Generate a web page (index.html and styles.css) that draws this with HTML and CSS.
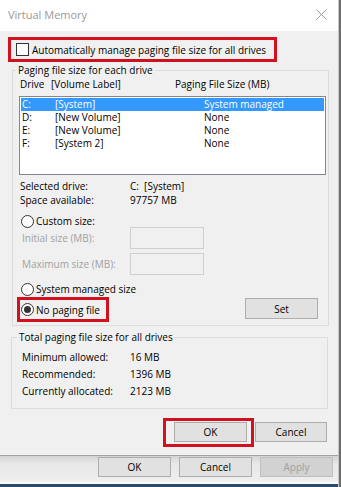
FILE: index.html
```html
<!DOCTYPE html>
<html lang="en">
<head>
    <meta charset="UTF-8">
    <title>Virtual Memory</title>
    <link rel="stylesheet" href="styles.css">
</head>
<body>
<div class="screen">
    <div class="main">
        <div class="dialog">
            <div class="titlebar">
                <span class="title">Virtual Memory</span>
                <svg class="close" width="11" height="11" viewBox="0 0 11 11">
                    <path d="M0.5 0.5 L10.5 10.5 M10.5 0.5 L0.5 10.5" stroke="#9a9a9a" stroke-width="1"/>
                </svg>
            </div>
            <div class="content">
                <div class="highlight auto-box">
                    <span class="checkbox"></span>
                    <span>Automatically manage paging file size for all drives</span>
                </div>

                <fieldset class="group group-drives">
                    <legend>Paging file size for each drive</legend>
                    <div class="list-head">
                        <span>Drive</span>
                        <span>[Volume Label]</span>
                        <span>Paging File Size (MB)</span>
                    </div>
                    <div class="listbox">
                        <div class="list-row selected"><span>C:</span><span>[System]</span><span>System managed</span></div>
                        <div class="list-row"><span>D:</span><span>[New Volume]</span><span>None</span></div>
                        <div class="list-row"><span>E:</span><span>[New Volume]</span><span>None</span></div>
                        <div class="list-row"><span>F:</span><span>[System 2]</span><span>None</span></div>
                    </div>
                    <div class="info">
                        <span>Selected drive:</span><span>C:&nbsp; [System]</span>
                        <span>Space available:</span><span>97757 MB</span>
                    </div>
                    <div class="radio-row row-custom">
                        <span class="radio"></span><span>Custom size:</span>
                    </div>
                    <div class="field-row">
                        <span>Initial size (MB):</span><span class="textbox"></span>
                    </div>
                    <div class="field-row row-max">
                        <span>Maximum size (MB):</span><span class="textbox"></span>
                    </div>
                    <div class="radio-row row-managed">
                        <span class="radio"></span><span>System managed size</span>
                    </div>
                    <div class="nopage-row">
                        <div class="highlight nopage-box">
                            <span class="radio checked"></span><span>No paging file</span>
                        </div>
                        <button class="btn btn-set" type="button">Set</button>
                    </div>
                </fieldset>

                <fieldset class="group group-total">
                    <legend>Total paging file size for all drives</legend>
                    <div class="totals">
                        <span>Minimum allowed:</span><span>16 MB</span>
                        <span>Recommended:</span><span>1396 MB</span>
                        <span>Currently allocated:</span><span>2123 MB</span>
                    </div>
                </fieldset>

                <div class="dialog-buttons">
                    <div class="highlight ok-box">
                        <button class="btn" type="button">OK</button>
                    </div>
                    <button class="btn btn-cancel" type="button">Cancel</button>
                </div>
            </div>
        </div>
        <div class="parent-bar">
            <button class="btn" type="button">OK</button>
            <button class="btn" type="button">Cancel</button>
            <button class="btn" type="button" disabled>Apply</button>
        </div>
    </div>
    <div class="edge"></div>
</div>
</body>
</html>
```

FILE: styles.css
```css
* {
    box-sizing: border-box;
    margin: 0;
    padding: 0;
}

body {
    width: 341px;
    height: 487px;
    overflow: hidden;
    background: #f0f0f0;
    color: #000;
    font-family: "Open Sans", "Noto Sans", sans-serif;
    font-size: 10px;
}

.screen {
    display: flex;
    height: 487px;
}

.main {
    width: 338px;
    display: flex;
    flex-direction: column;
}

.edge {
    width: 3px;
    border-left: 1px solid #c6c6c6;
    background: #6f6f6f;
}

/* dialog */

.dialog {
    height: 456px;
    display: flex;
    flex-direction: column;
    background: #f0f0f0;
    border-bottom: 1px solid #a3a3a3;
}

.titlebar {
    height: 31px;
    display: flex;
    align-items: center;
    justify-content: space-between;
    padding: 0 11px 2px 8px;
    background: #fff;
}

.title {
    color: #999;
    font-size: 11px;
}

.content {
    flex: 1;
    padding: 6px 0 0 8px;
}

.highlight {
    border: 3px solid #d1111d;
}

.auto-box {
    display: flex;
    align-items: center;
    gap: 3px;
    width: 269px;
    height: 25px;
    padding-left: 5px;
}

.checkbox {
    width: 13px;
    height: 13px;
    border: 1px solid #333;
    background: #fff;
}

.group {
    border: 1px solid #dcdcdc;
}

.group legend {
    line-height: 14px;
    padding: 0 2px;
}

.group-drives {
    width: 317px;
    margin: 1px 0 0 4px;
    padding: 0 0 3px 7px;
}

.group-drives legend {
    margin-left: -4px;
}

.list-head {
    display: grid;
    grid-template-columns: 31px 124px auto;
    line-height: 14px;
}

.listbox {
    width: 307px;
    height: 79px;
    margin: 5px 0 0 -1px;
    padding: 1px;
    border: 1px solid #828790;
    background: #fff;
}

.list-row {
    display: grid;
    grid-template-columns: 33px 149px auto;
    height: 13px;
    line-height: 13px;
    padding-left: 1px;
}

.list-row.selected {
    background: #3399ff;
    color: #fff;
}

.info {
    display: grid;
    grid-template-columns: 110px auto;
    line-height: 14px;
    margin-top: 4px;
}

.radio-row {
    display: flex;
    align-items: center;
    gap: 2px;
    height: 12px;
    margin-left: 1px;
}

.row-custom {
    margin-top: 8px;
}

.row-managed {
    margin-top: 8px;
}

.radio {
    position: relative;
    width: 13px;
    height: 13px;
    border: 1px solid #333;
    border-radius: 50%;
    background: #fff;
}

.radio.checked::after {
    content: "";
    position: absolute;
    left: 2px;
    top: 2px;
    width: 7px;
    height: 7px;
    border-radius: 50%;
    background: #333;
}

.field-row {
    display: grid;
    grid-template-columns: 108px 74px;
    align-items: center;
    padding-left: 2px;
    color: #a0a0a0;
}

.row-max {
    margin-top: 4px;
}

.textbox {
    height: 22px;
    border: 1px solid #cfcfcf;
    background: #f0f0f0;
}

.nopage-row {
    display: flex;
    align-items: flex-start;
    margin-top: 2px;
}

.nopage-box {
    display: flex;
    align-items: center;
    gap: 2px;
    width: 92px;
    height: 25px;
    margin-left: -3px;
    padding-left: 1px;
}

.btn {
    width: 73px;
    height: 20px;
    border: 1px solid #adadad;
    background: #e1e1e1;
    color: #000;
    font: inherit;
    line-height: 18px;
    text-align: center;
}

.btn:disabled {
    border-color: #bfbfbf;
    background: #d2d2d2;
    color: #a0a0a0;
}

.btn-set {
    height: 21px;
    margin: 1px 10px 0 auto;
}

.group-total {
    width: 317px;
    margin: 4px 0 0 3px;
    padding: 5px 0 8px 10px;
}

.group-total legend {
    margin-left: -5px;
}

.totals {
    display: grid;
    grid-template-columns: 108px auto;
    line-height: 17px;
}

.dialog-buttons {
    display: flex;
    align-items: flex-start;
    justify-content: flex-end;
    margin-top: 9px;
    padding-right: 11px;
}

.ok-box {
    padding: 1px 4px 2px 8px;
}

.btn-cancel {
    width: 72px;
    margin: 4px 0 0 1px;
}

/* window behind */

.parent-bar {
    flex: 1;
    display: flex;
    justify-content: flex-end;
    gap: 8px;
    padding: 1px 5px 0 0;
    background: linear-gradient(#d4d4d4 0, #e8e8e8 8px, #eeeeee 24px, #fafafa 27px);
    border-bottom: 3px solid #2b4c6f;
}
```
